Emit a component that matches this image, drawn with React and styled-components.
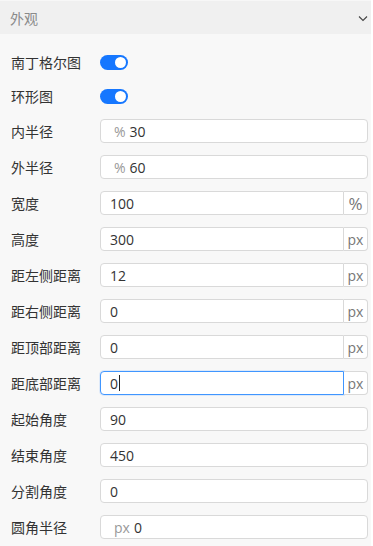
import React from "react";
import styled, { createGlobalStyle } from "styled-components";

const Global = createGlobalStyle`
  html, body { margin: 0; padding: 0; background: #f8f8f8; }
  body { font-family: "Open Sans", "Noto Sans CJK SC", sans-serif; }
`;

const Panel = styled.div`
  width: 371px;
  background: #f8f8f8;
  border-right: 2px solid #ffffff;
`;

const Header = styled.div`
  height: 34px;
  background: #f0f0f0;
  border-top: 1px solid #f7f7f7;
  box-sizing: border-box;
  display: flex;
  align-items: center;
  justify-content: space-between;
  padding: 0 2px 0 10px;
  color: #8a8a8a;
  font-size: 14px;
`;

const Body = styled.div`
  display: flex;
  flex-direction: column;
  gap: 12px;
  padding: 17px 3px 10px 11px;
`;

const Row = styled.div`
  display: grid;
  grid-template-columns: 89px 1fr;
  align-items: center;
  height: ${(p) => (p.$compact ? "22px" : "24px")};
`;

const Label = styled.div`
  font-size: 14px;
  color: #333;
  white-space: nowrap;
`;

const Toggle = styled.div`
  width: 28px;
  height: 15px;
  border-radius: 8px;
  background: #1677ff;
  position: relative;
  &::after {
    content: "";
    position: absolute;
    right: 2px;
    top: 2px;
    width: 11px;
    height: 11px;
    border-radius: 50%;
    background: #fff;
  }
`;

const Group = styled.div`
  display: flex;
  height: 24px;
`;

const Field = styled.div`
  flex: 1;
  box-sizing: border-box;
  height: 24px;
  display: flex;
  align-items: center;
  padding: 0 9px;
  background: #fff;
  border: 1px solid ${(p) => (p.$focus ? "#4096ff" : "#d9d9d9")};
  box-shadow: ${(p) => (p.$focus ? "0 0 0 1px rgba(64,150,255,0.15)" : "none")};
  border-radius: ${(p) => (p.$addon ? "4px 0 0 4px" : "4px")};
  font-size: 14px;
  color: #333;
`;

const Prefix = styled.span`
  color: #999;
  margin-left: 4px;
  margin-right: 4px;
`;

const Caret = styled.span`
  display: inline-block;
  width: 1px;
  height: 16px;
  background: #222;
  margin-left: 1px;
`;

const Addon = styled.div`
  width: 24px;
  box-sizing: border-box;
  height: 24px;
  display: flex;
  align-items: center;
  justify-content: center;
  background: #fff;
  border: 1px solid #d9d9d9;
  border-left: none;
  border-radius: 0 4px 4px 0;
  color: #777;
  font-size: ${(p) => (p.$big ? "17px" : "14px")};
`;

const rows = [
  { label: "内半径", prefix: "%", value: "30" },
  { label: "外半径", prefix: "%", value: "60" },
  { label: "宽度", value: "100", addon: "%" },
  { label: "高度", value: "300", addon: "px" },
  { label: "距左侧距离", value: "12", addon: "px" },
  { label: "距右侧距离", value: "0", addon: "px" },
  { label: "距顶部距离", value: "0", addon: "px" },
  { label: "距底部距离", value: "0", addon: "px", focus: true },
  { label: "起始角度", value: "90" },
  { label: "结束角度", value: "450" },
  { label: "分割角度", value: "0" },
  { label: "圆角半径", prefix: "px", value: "0" },
];

export default function App() {
  return (
    <>
      <Global />
      <Panel>
        <Header>
          <span>外观</span>
          <svg width="12" height="12" viewBox="0 0 12 12">
            <path d="M2 4.5 L6 8.5 L10 4.5" fill="none" stroke="#444" strokeWidth="1.1" />
          </svg>
        </Header>
        <Body>
          <Row $compact>
            <Label>南丁格尔图</Label>
            <Toggle />
          </Row>
          <Row $compact>
            <Label>环形图</Label>
            <Toggle />
          </Row>
          {rows.map((r) => (
            <Row key={r.label}>
              <Label>{r.label}</Label>
              <Group>
                <Field $addon={!!r.addon} $focus={r.focus}>
                  {r.prefix && <Prefix>{r.prefix}</Prefix>}
                  {r.value}
                  {r.focus && <Caret />}
                </Field>
                {r.addon && <Addon $big={r.addon === "%"}>{r.addon}</Addon>}
              </Group>
            </Row>
          ))}
        </Body>
      </Panel>
    </>
  );
}
